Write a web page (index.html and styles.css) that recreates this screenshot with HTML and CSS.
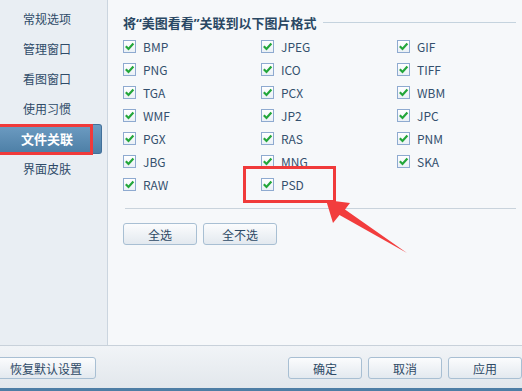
FILE: index.html
```html
<!DOCTYPE html>
<html lang="zh">
<head>
<meta charset="utf-8">
<link rel="stylesheet" href="styles.css">
</head>
<body>
<div class="window">
  <div class="main">
    <nav class="sidebar">
      <div class="nav-item">常规选项</div>
      <div class="nav-item">管理窗口</div>
      <div class="nav-item">看图窗口</div>
      <div class="nav-item">使用习惯</div>
      <div class="nav-item active">文件关联</div>
      <div class="nav-item">界面皮肤</div>
    </nav>
    <section class="content">
      <div class="title-row"><h2 class="title">将“美图看看”关联到以下图片格式</h2><span class="rule"></span></div>
      <div class="formats">
        <label class="fmt"><span class="cb"><svg viewBox="0 0 11 11"><path d="M1.8 5.3 L4.5 8 L9.4 2.6"/></svg></span>BMP</label>
        <label class="fmt"><span class="cb"><svg viewBox="0 0 11 11"><path d="M1.8 5.3 L4.5 8 L9.4 2.6"/></svg></span>JPEG</label>
        <label class="fmt"><span class="cb"><svg viewBox="0 0 11 11"><path d="M1.8 5.3 L4.5 8 L9.4 2.6"/></svg></span>GIF</label>
        <label class="fmt"><span class="cb"><svg viewBox="0 0 11 11"><path d="M1.8 5.3 L4.5 8 L9.4 2.6"/></svg></span>PNG</label>
        <label class="fmt"><span class="cb"><svg viewBox="0 0 11 11"><path d="M1.8 5.3 L4.5 8 L9.4 2.6"/></svg></span>ICO</label>
        <label class="fmt"><span class="cb"><svg viewBox="0 0 11 11"><path d="M1.8 5.3 L4.5 8 L9.4 2.6"/></svg></span>TIFF</label>
        <label class="fmt"><span class="cb"><svg viewBox="0 0 11 11"><path d="M1.8 5.3 L4.5 8 L9.4 2.6"/></svg></span>TGA</label>
        <label class="fmt"><span class="cb"><svg viewBox="0 0 11 11"><path d="M1.8 5.3 L4.5 8 L9.4 2.6"/></svg></span>PCX</label>
        <label class="fmt"><span class="cb"><svg viewBox="0 0 11 11"><path d="M1.8 5.3 L4.5 8 L9.4 2.6"/></svg></span>WBM</label>
        <label class="fmt"><span class="cb"><svg viewBox="0 0 11 11"><path d="M1.8 5.3 L4.5 8 L9.4 2.6"/></svg></span>WMF</label>
        <label class="fmt"><span class="cb"><svg viewBox="0 0 11 11"><path d="M1.8 5.3 L4.5 8 L9.4 2.6"/></svg></span>JP2</label>
        <label class="fmt"><span class="cb"><svg viewBox="0 0 11 11"><path d="M1.8 5.3 L4.5 8 L9.4 2.6"/></svg></span>JPC</label>
        <label class="fmt"><span class="cb"><svg viewBox="0 0 11 11"><path d="M1.8 5.3 L4.5 8 L9.4 2.6"/></svg></span>PGX</label>
        <label class="fmt"><span class="cb"><svg viewBox="0 0 11 11"><path d="M1.8 5.3 L4.5 8 L9.4 2.6"/></svg></span>RAS</label>
        <label class="fmt"><span class="cb"><svg viewBox="0 0 11 11"><path d="M1.8 5.3 L4.5 8 L9.4 2.6"/></svg></span>PNM</label>
        <label class="fmt"><span class="cb"><svg viewBox="0 0 11 11"><path d="M1.8 5.3 L4.5 8 L9.4 2.6"/></svg></span>JBG</label>
        <label class="fmt"><span class="cb"><svg viewBox="0 0 11 11"><path d="M1.8 5.3 L4.5 8 L9.4 2.6"/></svg></span>MNG</label>
        <label class="fmt"><span class="cb"><svg viewBox="0 0 11 11"><path d="M1.8 5.3 L4.5 8 L9.4 2.6"/></svg></span>SKA</label>
        <label class="fmt"><span class="cb"><svg viewBox="0 0 11 11"><path d="M1.8 5.3 L4.5 8 L9.4 2.6"/></svg></span>RAW</label>
        <label class="fmt"><span class="cb"><svg viewBox="0 0 11 11"><path d="M1.8 5.3 L4.5 8 L9.4 2.6"/></svg></span>PSD</label>
      </div>
      <div class="sep"></div>
      <div class="actions">
        <button class="btn">全选</button>
        <button class="btn">全不选</button>
      </div>
    </section>
  </div>
  <footer class="footer">
    <button class="btn btn-reset">恢复默认设置</button>
    <div class="spacer"></div>
    <button class="btn">确定</button>
    <button class="btn">取消</button>
    <button class="btn">应用</button>
  </footer>
  <div class="mark mark-nav"></div>
  <div class="mark mark-psd"></div>
  <svg class="arrow" viewBox="0 0 522 391"><polygon points="326,200 350,203 345,209.5 407,253 339.5,215 333,223"/></svg>
</div>
</body>
</html>
```
FILE: styles.css
```css
* { box-sizing: border-box; }
html, body { margin: 0; padding: 0; }
body {
  width: 522px;
  height: 391px;
  overflow: hidden;
  font-family: "Noto Sans CJK SC", "Noto Sans", sans-serif;
  font-size: 12px;
  color: #2e4a66;
}
.window {
  position: relative;
  width: 522px;
  height: 391px;
  display: flex;
  flex-direction: column;
  background: #f6f8fa;
}
.main {
  height: 345px;
  display: flex;
}
.sidebar {
  width: 108px;
  background: #e9eef3;
  border-right: 1px solid #cbd5df;
  padding-top: 4px;
}
.nav-item {
  height: 30px;
  line-height: 30px;
  padding-left: 23px;
  color: #2f4b68;
  font-size: 12px;
}
.nav-item.active {
  margin-right: 5px;
  padding-left: 21px;
  color: #ffffff;
  font-weight: bold;
  font-size: 13px;
  background: linear-gradient(#6d9cc2, #4d7fa6);
  border: 1px solid #41709a;
  border-left: none;
  border-radius: 0 3px 3px 0;
  line-height: 28px;
}
.content {
  flex: 1;
  background: #f6f8fa;
  padding-left: 15px;
}
.title-row {
  display: flex;
  align-items: center;
  height: 18px;
  margin-top: 13px;
}
.title {
  margin: 0;
  font-family: "Noto Sans", "Noto Sans CJK SC", sans-serif;
  font-size: 13px;
  font-weight: bold;
  color: #2a4864;
  white-space: nowrap;
}
.rule {
  flex: 1;
  height: 1px;
  background: #c5d3de;
  margin-left: 6px;
  margin-right: 6px;
}
.formats {
  display: grid;
  grid-template-columns: 138px 136px 1fr;
  grid-auto-rows: 23px;
  margin-top: 4px;
}
.fmt {
  display: flex;
  align-items: center;
  gap: 7px;
  color: #34506e;
  font-size: 12px;
}
.cb {
  width: 13px;
  height: 13px;
  border: 1px solid #8eaad0;
  background: linear-gradient(#ffffff, #eaf0f6);
  display: flex;
}
.cb svg {
  width: 11px;
  height: 11px;
  fill: none;
  stroke: #23a63a;
  stroke-width: 2.2;
}
.sep {
  height: 1px;
  background: #c9d3dc;
  margin: 12px 6px 0 2px;
}
.actions {
  display: flex;
  gap: 6px;
  margin-top: 14px;
}
.btn {
  width: 74px;
  height: 22px;
  padding: 0;
  font-family: "Noto Sans CJK SC", sans-serif;
  font-size: 12px;
  color: #2e4a66;
  background: linear-gradient(#fbfcfd, #e3e9ef);
  border: 1px solid #a8bfd3;
  border-radius: 3px;
}
.footer {
  height: 46px;
  display: flex;
  gap: 6px;
  padding-top: 11px;
  background: linear-gradient(#f1f4f7, #e2e7ec);
  border-top: 1px solid #c8d1da;
  border-bottom: 3px solid #4e7ea5;
}
.btn-reset {
  width: 100px;
  margin-left: -4px;
}
.spacer { flex: 1; }
.mark {
  position: absolute;
  border: 3px solid #f03a3a;
}
.mark-nav {
  left: -3px;
  top: 124px;
  width: 96px;
  height: 31px;
}
.mark-psd {
  left: 243px;
  top: 166px;
  width: 93px;
  height: 37px;
}
.arrow {
  position: absolute;
  left: 0;
  top: 0;
  width: 522px;
  height: 391px;
  fill: #f23d3d;
  pointer-events: none;
}
```
